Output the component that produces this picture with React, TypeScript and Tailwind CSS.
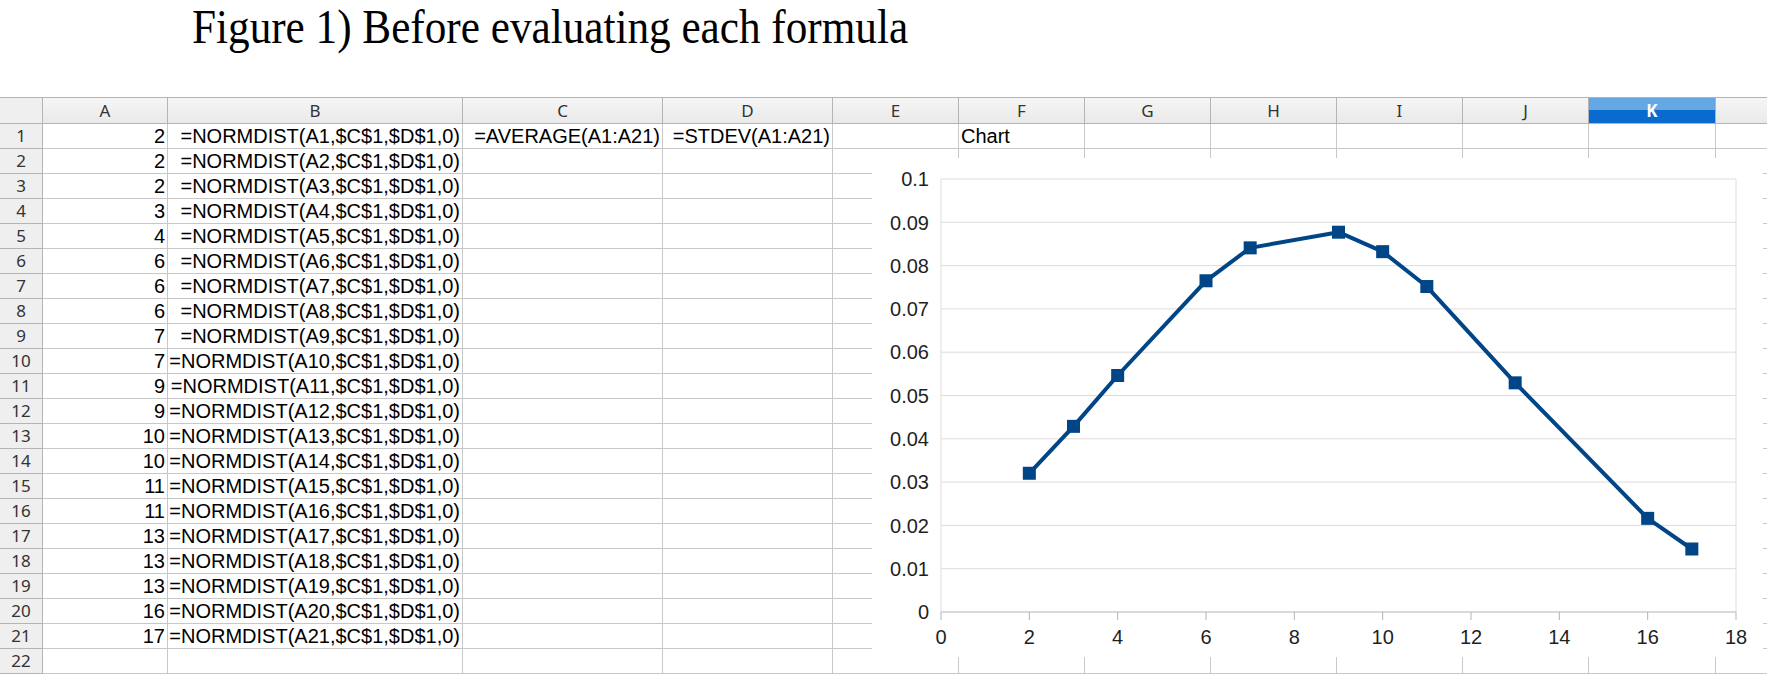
import React from 'react';

const cols = ['A', 'B', 'C', 'D', 'E', 'F', 'G', 'H', 'I', 'J', 'K', ''];
const colW = [125, 295, 200, 170, 126, 126, 126, 126, 126, 126, 127, 126];
const values = [2, 2, 2, 3, 4, 6, 6, 6, 7, 7, 9, 9, 10, 10, 11, 11, 13, 13, 13, 16, 17];

// same numbers the sheet would produce
const mean = values.reduce((a, b) => a + b, 0) / values.length;
const sd = Math.sqrt(values.reduce((a, v) => a + (v - mean) ** 2, 0) / (values.length - 1));
const pdf = (x: number) => Math.exp(-((x - mean) ** 2) / (2 * sd * sd)) / (sd * Math.sqrt(2 * Math.PI));
const points = Array.from(new Set(values)).map((x) => ({ x, y: pdf(x) }));

const cellText = (row: number, col: number): { text: string; align: 'left' | 'right' } | null => {
  if (row > 21) return null;
  if (col === 0) return { text: String(values[row - 1]), align: 'right' };
  if (col === 1) return { text: `=NORMDIST(A${row},$C$1,$D$1,0)`, align: 'right' };
  if (row === 1 && col === 2) return { text: '=AVERAGE(A1:A21)', align: 'right' };
  if (row === 1 && col === 3) return { text: '=STDEV(A1:A21)', align: 'right' };
  if (row === 1 && col === 5) return { text: 'Chart', align: 'left' };
  return null;
};

const Chart = () => {
  const left = 69;
  const right = 864;
  const top = 21;
  const bottom = 454;
  const px = (x: number) => left + (x / 18) * (right - left);
  const py = (y: number) => bottom - (y / 0.1) * (bottom - top);
  const yTicks = Array.from({ length: 11 }, (_, i) => i / 100);
  const xTicks = Array.from({ length: 10 }, (_, i) => i * 2);

  return (
    <svg width="891" height="499" className="block">
      {yTicks.map((t) => (
        <g key={t}>
          <line x1={left} x2={right} y1={py(t)} y2={py(t)} stroke={t === 0 ? '#b3b3b3' : '#dcdcdc'} strokeWidth="1" />
          <text
            x={57}
            y={py(t)}
            dy="0.36em"
            textAnchor="end"
            fontSize="20"
            fill="#1f1f1f"
            fontFamily="'Liberation Sans', Arial, sans-serif"
          >
            {t === 0 ? '0' : t === 0.1 ? '0.1' : t.toFixed(2)}
          </text>
        </g>
      ))}
      <line x1={left} x2={left} y1={top} y2={bottom} stroke="#dcdcdc" />
      <line x1={right} x2={right} y1={top} y2={bottom} stroke="#dcdcdc" />
      {xTicks.map((t) => (
        <g key={t}>
          <line x1={px(t)} x2={px(t)} y1={bottom} y2={bottom + 8} stroke="#b3b3b3" />
          <text
            x={px(t)}
            y={486}
            textAnchor="middle"
            fontSize="20"
            fill="#1f1f1f"
            fontFamily="'Liberation Sans', Arial, sans-serif"
          >
            {t}
          </text>
        </g>
      ))}
      <polyline
        points={points.map((p) => `${px(p.x)},${py(p.y)}`).join(' ')}
        fill="none"
        stroke="#004586"
        strokeWidth="4"
        strokeLinejoin="round"
      />
      {points.map((p) => (
        <rect key={p.x} x={px(p.x) - 6.5} y={py(p.y) - 6.5} width="13" height="13" fill="#004586" />
      ))}
    </svg>
  );
};

export default function App() {
  return (
    <div className="relative w-[1767px] h-[674px] overflow-hidden bg-white font-['Liberation_Sans',Arial,sans-serif]">
      <div className="h-[97px] pl-[192px] pt-[3px]">
        <h1 className="inline-block origin-left scale-x-[0.9] whitespace-nowrap text-[48px] leading-none text-black font-['Liberation_Serif','Times_New_Roman',serif]">
          Figure 1) Before evaluating each formula
        </h1>
      </div>

      {/* column headers */}
      <div className="flex h-[27px] border-t border-b border-[#b4b4b4] bg-[#efefef] font-['Noto_Sans','Open_Sans',sans-serif] text-[17px] text-[#333]">
        <div className="w-[43px] shrink-0 border-r border-[#b4b4b4]" />
        {cols.map((c, i) => (
          <div
            key={i}
            style={{ width: colW[i] }}
            className={
              c === 'K'
                ? 'shrink-0 flex items-center justify-center border-r border-[#b4b4b4] bg-[linear-gradient(#64a7e2_0%,#64a7e2_48%,#0a6bcf_48%,#0a6bcf_100%)] text-white font-bold'
                : 'shrink-0 flex items-center justify-center border-r border-[#b4b4b4] bg-[linear-gradient(#f6f6f6,#e9e9e9)]'
            }
          >
            {c}
          </div>
        ))}
      </div>

      {/* rows */}
      {Array.from({ length: 22 }, (_, r) => r + 1).map((row) => (
        <div key={row} className="flex h-[25px]">
          <div className="w-[43px] shrink-0 flex items-center justify-center border-r border-b border-[#b4b4b4] bg-[#efefef] font-['Noto_Sans','Open_Sans',sans-serif] text-[17px] text-[#333]">
            {row}
          </div>
          {cols.map((_, i) => {
            const cell = cellText(row, i);
            return (
              <div
                key={i}
                style={{ width: colW[i] }}
                className={
                  cell?.align === 'left'
                    ? 'shrink-0 flex items-center justify-start pl-[2px] border-r border-b border-[#c8c8c8] text-[20px] text-black whitespace-nowrap'
                    : 'shrink-0 flex items-center justify-end pr-[2px] border-r border-b border-[#c8c8c8] text-[20px] text-black whitespace-nowrap'
                }
              >
                {cell?.text}
              </div>
            );
          })}
        </div>
      ))}

      {/* floating chart object */}
      <div className="absolute left-[872px] top-[158px] w-[891px] h-[499px] bg-white">
        <Chart />
      </div>
    </div>
  );
}
